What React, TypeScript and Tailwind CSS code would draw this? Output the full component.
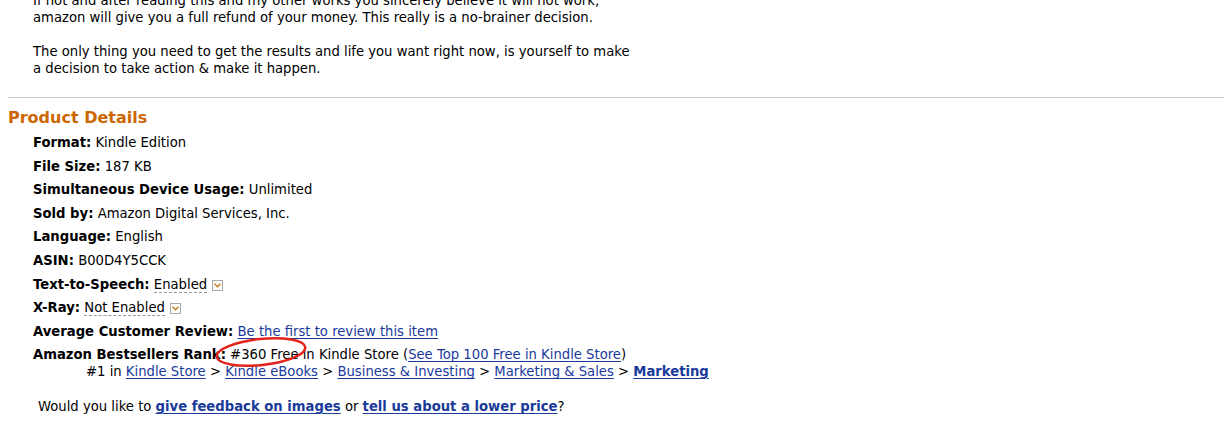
import React from 'react';

const font = { fontFamily: '"DejaVu Sans", Verdana, sans-serif' };

function Dropdown() {
    return (
        <span className="ml-[5px] inline-flex h-[11px] w-[11px] items-center justify-center border border-[#a9a9a9] bg-[#fbfbf7] align-[1px]">
            <svg width="7" height="5" viewBox="0 0 7 5">
                <path d="M0.5 0.8 L3.5 3.8 L6.5 0.8" fill="none" stroke="#c07a1a" strokeWidth="1.3" />
            </svg>
        </span>
    );
}

function Row({ label, children }: { label: string; children: React.ReactNode }) {
    return (
        <li className="leading-[17px]">
            <b>{label}</b> {children}
        </li>
    );
}

const link = 'text-[#1a3a9b] underline underline-offset-2';
const boldLink = 'font-bold text-[#1a3a9b] underline underline-offset-2';

export default function App() {
    return (
        <div className="min-h-[426px] w-[1224px] overflow-hidden bg-white text-[13.2px] text-black" style={font}>
            {/* Description tail */}
            <div className="-mt-[8px] pl-[33px] leading-[17px]">
                <p>If not and after reading this and my other works you sincerely believe it will not work,</p>
                <p>amazon will give you a full refund of your money. This really is a no-brainer decision.</p>
                <p className="mt-[17px]">The only thing you need to get the results and life you want right now, is yourself to make</p>
                <p>a decision to take action &amp; make it happen.</p>
            </div>

            <div className="ml-[8px] mt-[20px] h-px bg-[#cccccc]" />

            <h2 className="ml-[8px] mt-[10px] text-[16px] font-bold leading-[20px] text-[#cc6600]">Product Details</h2>

            <ul className="mt-[6px] flex flex-col gap-[6.6px] pl-[33px]">
                <Row label="Format:">Kindle Edition</Row>
                <Row label="File Size:">187 KB</Row>
                <Row label="Simultaneous Device Usage:">Unlimited</Row>
                <Row label="Sold by:">Amazon Digital Services, Inc.</Row>
                <Row label="Language:">English</Row>
                <Row label="ASIN:">B00D4Y5CCK</Row>
                <Row label="Text-to-Speech:">
                    <span className="border-b border-dashed border-[#999]">Enabled</span>
                    <Dropdown />
                </Row>
                <Row label="X-Ray:">
                    <span className="border-b border-dashed border-[#999]">Not Enabled</span>
                    <Dropdown />
                </Row>
                <Row label="Average Customer Review:">
                    <a className={link}>Be the first to review this item</a>
                </Row>
                <li className="relative leading-[17px]">
                    <b>Amazon Bestsellers Rank:</b> #360 Free in Kindle Store (
                    <a className={link}>See Top 100 Free in Kindle Store</a>)
                    <div className="pl-[53px]">
                        #1 in <a className={link}>Kindle Store</a> &gt; <a className={link}>Kindle eBooks</a> &gt;{' '}
                        <a className={link}>Business &amp; Investing</a> &gt; <a className={link}>Marketing &amp; Sales</a> &gt;{' '}
                        <a className={boldLink}>Marketing</a>
                    </div>
                    {/* hand-drawn highlight */}
                    <svg className="pointer-events-none absolute left-[180px] top-[-12px]" width="96" height="36" viewBox="0 0 96 36">
                        <ellipse cx="48" cy="18" rx="44.5" ry="13" fill="none" stroke="#e3231b" strokeWidth="2.5" transform="rotate(-6 48 18)" />
                    </svg>
                </li>
            </ul>

            <p className="mt-[18px] pl-[38px] leading-[17px]">
                Would you like to <a className={boldLink}>give feedback on images</a> or{' '}
                <a className={boldLink}>tell us about a lower price</a>?
            </p>
        </div>
    );
}
